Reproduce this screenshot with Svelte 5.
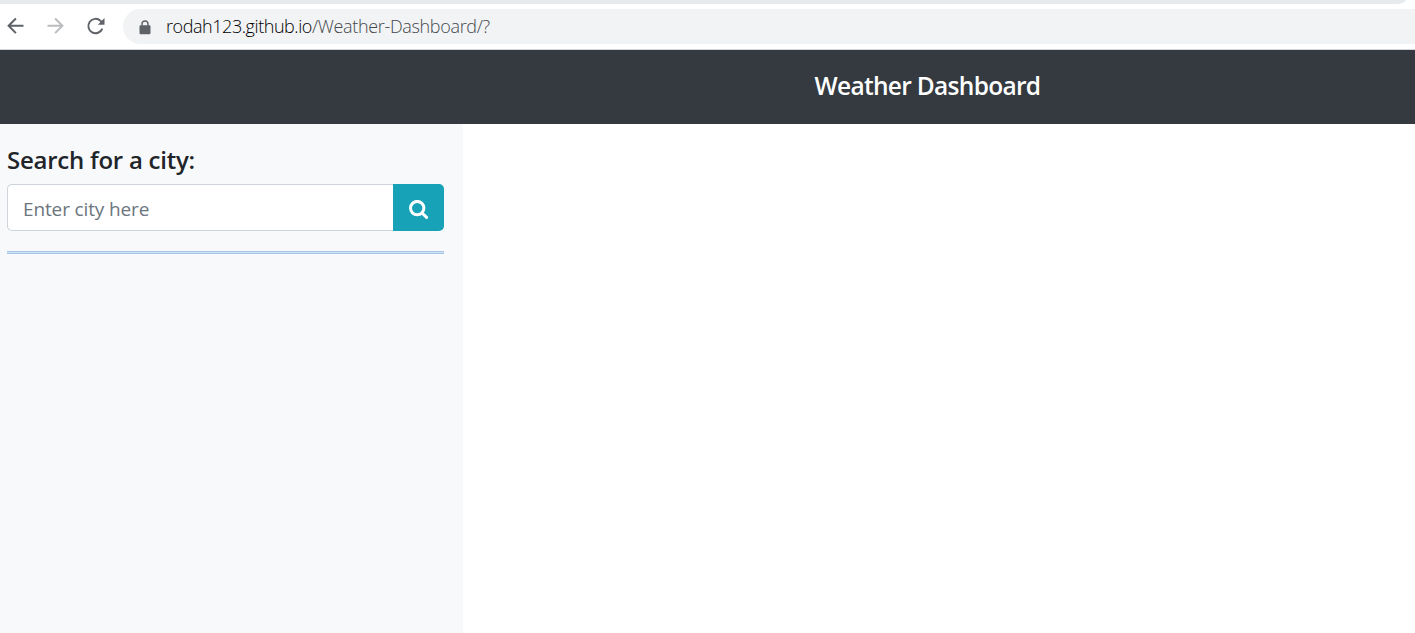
<script>
  let city = $state('');
</script>

<div class="window">
  <div class="tabs"><div class="strip"></div></div>
  <div class="toolbar">
    <svg class="nav" viewBox="0 0 20 20"><path d="M18.5 9.8H4M10.9 2.5 3.6 9.8l7.3 7.3" /></svg>
    <svg class="nav dim" viewBox="0 0 20 20"><path d="M2.5 9.8H17M10.1 2.5l7.3 7.3-7.3 7.3" /></svg>
    <svg class="nav" viewBox="0 0 20 20">
      <path d="M17.3 12.6A7.2 7.2 0 1 1 15.6 4.9L17.4 6.8" />
      <path class="solid" d="M19.5 2v6.7h-6.7z" />
    </svg>
    <div class="address">
      <svg class="lock" viewBox="0 0 12 15">
        <path d="M3 6V4a3 3 0 0 1 6 0v2" />
        <rect x="0.5" y="5.2" width="11" height="9" rx="1.2" />
      </svg>
      <span class="host">rodah123.github.io</span><span class="path">/Weather-Dashboard/?</span>
    </div>
  </div>
  <header><h1>Weather Dashboard</h1></header>
  <main>
    <aside>
      <h2>Search for a city:</h2>
      <div class="group">
        <input type="text" placeholder="Enter city here" bind:value={city} />
        <button aria-label="Search">
          <svg viewBox="0 0 20 20"><circle cx="8.2" cy="8.1" r="6.7" /><path d="m13 13 4.6 4.4" /></svg>
        </button>
      </div>
      <div class="rule"></div>
    </aside>
    <section></section>
  </main>
</div>

<style>
  :global(body) { margin: 0; background: #fff; }
  .window {
    height: 633px;
    display: flex;
    flex-direction: column;
    overflow: hidden;
    font-family: "Open Sans", "Noto Sans", sans-serif;
  }
  .tabs { height: 4px; flex: none; padding-right: 9px; }
  .strip { height: 4px; background: #e7eaed; border-bottom-right-radius: 10px 4px; }
  .toolbar {
    height: 40px;
    flex: none;
    display: flex;
    align-items: flex-start;
    padding: 5px 0 0 5px;
    border-bottom: 1px solid #d5d7da;
  }
  .nav {
    width: 20px;
    height: 20px;
    margin: 7px 20px 0 0;
    fill: none;
    stroke: #5f6368;
    stroke-width: 2;
  }
  .dim { stroke: #babcbe; }
  .nav .solid { fill: #5f6368; stroke: none; }
  .address {
    flex: 1;
    height: 35px;
    margin-left: -2px;
    padding-left: 16px;
    display: flex;
    align-items: center;
    background: #f1f3f4;
    border-radius: 18px 0 0 18px;
    font-size: 18px;
    font-weight: 300;
    white-space: nowrap;
  }
  .address span { line-height: 24px; padding-bottom: 2px; }
  .lock { width: 12px; height: 15px; margin: 1px 15px 0 0; fill: #5f6368; }
  .lock path { fill: none; stroke: #5f6368; stroke-width: 1.4; }
  .host { color: #000; letter-spacing: -0.44px; }
  .path { color: #44484c; letter-spacing: -0.33px; }
  header {
    height: 72px;
    flex: none;
    display: flex;
    align-items: center;
    justify-content: center;
    padding: 0 0 2px 440px;
    background: #343a40;
    color: #fff;
  }
  h1, h2 { margin: 0; font-weight: 600; white-space: nowrap; }
  h1 { font-size: 24.5px; line-height: 30px; letter-spacing: -0.7px; }
  main { flex: 1; display: flex; }
  aside { width: 437px; padding: 21px 19px 0 7px; background: #f8f9fb; }
  h2 { font-size: 24px; line-height: 30px; color: #212529; letter-spacing: -0.25px; }
  .group { display: flex; height: 47px; margin-top: 9px; }
  input {
    flex: 1;
    min-width: 0;
    box-sizing: border-box;
    border: 1px solid #ced4da;
    border-right: 0;
    border-radius: 5px 0 0 5px;
    padding: 3px 15px 0;
    background: #fff;
    font: 400 19px "Open Sans", "Noto Sans", sans-serif;
    letter-spacing: -0.13px;
    outline: none;
  }
  input::placeholder { color: #6c757d; opacity: 1; }
  button {
    width: 51px;
    padding: 0;
    border: 0;
    border-radius: 0 5px 5px 0;
    background: #17a2b8;
    display: flex;
    align-items: center;
    justify-content: center;
  }
  button svg { width: 20px; height: 20px; margin-top: 4px; fill: none; stroke: #fff; stroke-width: 3; stroke-linecap: round; }
  .rule {
    height: 1px;
    margin-top: 20px;
    border: 1px solid #a9c4e0;
    border-width: 1px 0;
    background: #cce5ff;
  }
  section { flex: 1; background: #fff; }
</style>
